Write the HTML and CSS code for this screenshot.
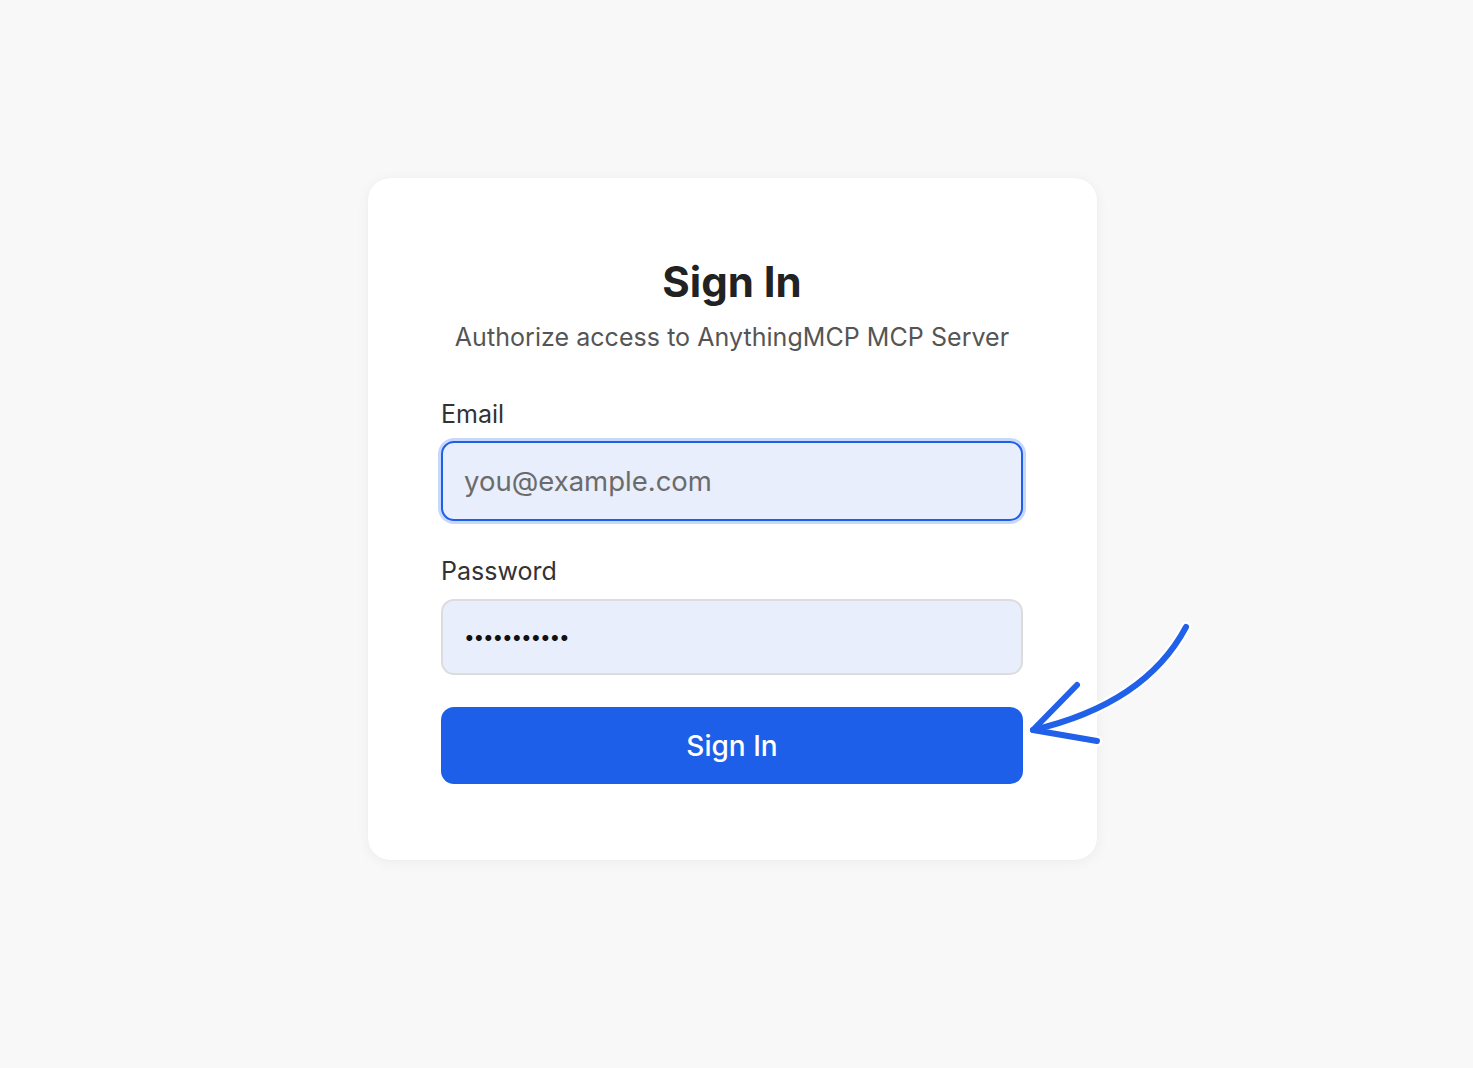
FILE: index.html
```html
<!DOCTYPE html>
<html lang="en">
<head>
<meta charset="utf-8">
<title>Sign In</title>
<link rel="stylesheet" href="styles.css">
</head>
<body>
<div class="card">
  <h1 class="title">Sign In</h1>
  <p class="subtitle">Authorize access to AnythingMCP MCP Server</p>
  <form class="form">
    <label class="label" for="email">Email</label>
    <input class="input input-focus" id="email" type="email" placeholder="you@example.com">
    <label class="label label-pw" for="pw">Password</label>
    <input class="input input-pw" id="pw" type="password" value="12345678901">
    <button class="btn" type="button">Sign In</button>
  </form>
</div>
<svg class="arrow" width="200" height="160" viewBox="1000 610 200 160">
  <path d="M1186 627 C1160 676 1110 712 1033 730" fill="none" stroke="#ffffff" stroke-width="11" stroke-linecap="round"/>
  <path d="M1077 685 L1033 730 L1097 741" fill="none" stroke="#ffffff" stroke-width="11" stroke-linecap="round" stroke-linejoin="round"/>
  <path d="M1186 627 C1160 676 1110 712 1033 730" fill="none" stroke="#2160e8" stroke-width="6" stroke-linecap="round"/>
  <path d="M1077 685 L1033 730 L1097 741" fill="none" stroke="#2160e8" stroke-width="6" stroke-linecap="round" stroke-linejoin="round"/>
</svg>
</body>
</html>
```
FILE: styles.css
```css
* { box-sizing: border-box; }
html, body { margin: 0; padding: 0; }
body {
  background: #f8f8f8;
  font-family: Inter, "Noto Sans", "Liberation Sans", sans-serif;
  width: 1473px;
  height: 1068px;
  overflow: hidden;
  position: relative;
  padding-top: 178px;
  padding-left: 368px;
}
.card {
  width: 729px;
  height: 682px;
  background: #ffffff;
  border-radius: 22px;
  box-shadow: 0 2px 14px rgba(0,0,0,0.05), 0 0 1px rgba(0,0,0,0.06);
  padding: 80px 74px 0 73px;
  display: flex;
  flex-direction: column;
}
.title {
  margin: 0;
  text-align: center;
  font-size: 42px;
  line-height: 48px;
  font-weight: 700;
  color: #222;
  letter-spacing: 0;
}
.subtitle {
  margin: 15px 0 0;
  text-align: center;
  font-size: 25px;
  line-height: 32px;
  color: #555;
  letter-spacing: 0.05px;
}
.form {
  display: flex;
  flex-direction: column;
  margin-top: 45px;
}
.label {
  font-size: 25px;
  line-height: 32px;
  color: #333;
  margin-bottom: 11px;
}
.label-pw { margin-top: 34px; margin-bottom: 12px; }
.input {
  width: 582px;
  height: 80px;
  border-radius: 13px;
  background: #e8eefb;
  font-family: inherit;
  font-size: 27.5px;
  padding: 0 21px;
  color: #222;
  outline: none;
}
.input-focus {
  border: 2px solid #1e5ee8;
  box-shadow: 0 0 0 3px #c8d8fa;
}
.input::placeholder { color: #6b6b6b; }
.input-pw {
  height: 76px;
  border: 2px solid #dcdcdc;
  font-size: 19px;
  letter-spacing: -1.2px;
  color: #111;
}
.btn {
  margin-top: 32px;
  width: 582px;
  height: 77px;
  border: none;
  border-radius: 13px;
  background: #1e5fe9;
  color: #ffffff;
  font-family: inherit;
  font-size: 28px;
  font-weight: 500;
}
.arrow {
  position: absolute;
  left: 1000px;
  top: 610px;
}
```
